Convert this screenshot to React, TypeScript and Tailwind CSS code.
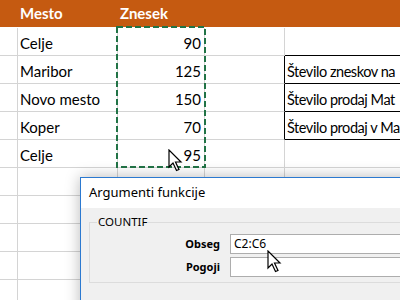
import React from 'react';

const rows: [string, number, string][] = [
  ['Celje', 90, ''],
  ['Maribor', 125, 'Število zneskov na'],
  ['Novo mesto', 150, 'Število prodaj Mat'],
  ['Koper', 70, 'Število prodaj v Ma'],
  ['Celje', 95, ''],
];

function Cursor({ className }: { className: string }) {
  return (
    <svg className={className} width="15" height="23" viewBox="0 0 15 23">
      <path
        d="M1 1 L1 18 L5 14 L8.5 21.5 L11 20.5 L7.5 13 L13 13 Z"
        fill="white"
        stroke="black"
        strokeWidth="1.2"
        strokeLinejoin="miter"
      />
    </svg>
  );
}

export default function App() {
  return (
    <div className="relative w-[400px] h-[300px] overflow-hidden bg-white font-['Lato','Noto_Sans',sans-serif] text-[15px] text-black">
      {/* Header */}
      <div className="flex h-[28px] bg-white">
        <div className="flex w-full h-[27px] bg-[#C55A11] items-center font-bold text-white">
          <div className="w-[18px]" />
          <div className="w-[100px] pl-[2px]">Mesto</div>
          <div className="w-[87px] pl-[2px]">Znesek</div>
        </div>
      </div>

      {/* Data rows */}
      {rows.map(([city, amount, note], i) => (
        <div key={i} className="flex h-[28px]">
          <div className="w-[18px] shrink-0 border-r border-b border-[#d4d4d4]" />
          <div className="w-[100px] shrink-0 border-r border-b border-[#d4d4d4] pl-[2px] flex items-end pb-[4px] leading-none">
            {city}
          </div>
          <div className="w-[87px] shrink-0 border-r border-b border-[#d4d4d4] pr-[3px] flex items-end justify-end pb-[4px] leading-none">
            {amount}
          </div>
          <div
            className={`w-[80px] shrink-0 border-b border-[#d4d4d4] border-r ${
              i >= 1 && i <= 3 ? 'border-r-black' : ''
            }`}
          />
          <div
            className={`flex-1 min-w-0 whitespace-nowrap overflow-hidden pl-[2px] flex items-end pb-[4px] leading-none text-[14.5px] tracking-[-0.45px] border-b ${
              i <= 3 ? 'border-b-black' : 'border-b-[#d4d4d4]'
            }`}
          >
            {note}
          </div>
        </div>
      ))}

      {/* Empty rows */}
      {[0, 1, 2, 3, 4].map((i) => (
        <div key={i} className="flex h-[28px]">
          <div className="w-[18px] shrink-0 border-r border-b border-[#d4d4d4]" />
          <div className="w-[100px] shrink-0 border-r border-b border-[#d4d4d4]" />
          <div className="w-[87px] shrink-0 border-r border-b border-[#d4d4d4]" />
          <div className="w-[80px] shrink-0 border-r border-b border-[#d4d4d4]" />
          <div className="flex-1 border-b border-[#d4d4d4]" />
        </div>
      ))}

      {/* Copy marquee */}
      <svg className="absolute left-[116px] top-[26px]" width="90" height="143">
        <rect
          x="1"
          y="1"
          width="88"
          height="140"
          fill="none"
          stroke="#217346"
          strokeWidth="2"
          strokeDasharray="6 3"
        />
      </svg>

      <Cursor className="absolute left-[168px] top-[149px]" />

      {/* Function arguments dialog */}
      <div className="absolute left-[80px] top-[177px] w-[340px] h-[140px] border border-[#2b79d0] bg-[#f0f0f0] shadow-[0_0_14px_rgba(0,0,0,0.28)] font-['Noto_Sans','Open_Sans',sans-serif]">
        <div className="h-[30px] bg-white flex items-center pl-[8px] text-[13px] text-black">
          Argumenti funkcije
        </div>
        <div className="pt-[14px] pl-[8px]">
          <div className="relative border border-[#dcdcdc] h-[61px] pt-[11px]">
            <span className="absolute left-[7px] top-[-9px] bg-[#f0f0f0] px-[1px] text-[11.5px] leading-[16px]">
              COUNTIF
            </span>
            <div className="flex items-center h-[20px]">
              <div className="w-[140px] text-right pr-[10px] text-[11px] font-bold">Obseg</div>
              <div className="flex-1 h-[20px] bg-white border border-[#adadad] pl-[3px] text-[12px] flex items-center">
                C2:C6
              </div>
            </div>
            <div className="flex items-center h-[20px] mt-[3px]">
              <div className="w-[140px] text-right pr-[10px] text-[11px] font-bold">Pogoji</div>
              <div className="flex-1 h-[20px] bg-white border border-[#adadad]" />
            </div>
          </div>
        </div>
      </div>

      <Cursor className="absolute left-[267px] top-[250px]" />
    </div>
  );
}
